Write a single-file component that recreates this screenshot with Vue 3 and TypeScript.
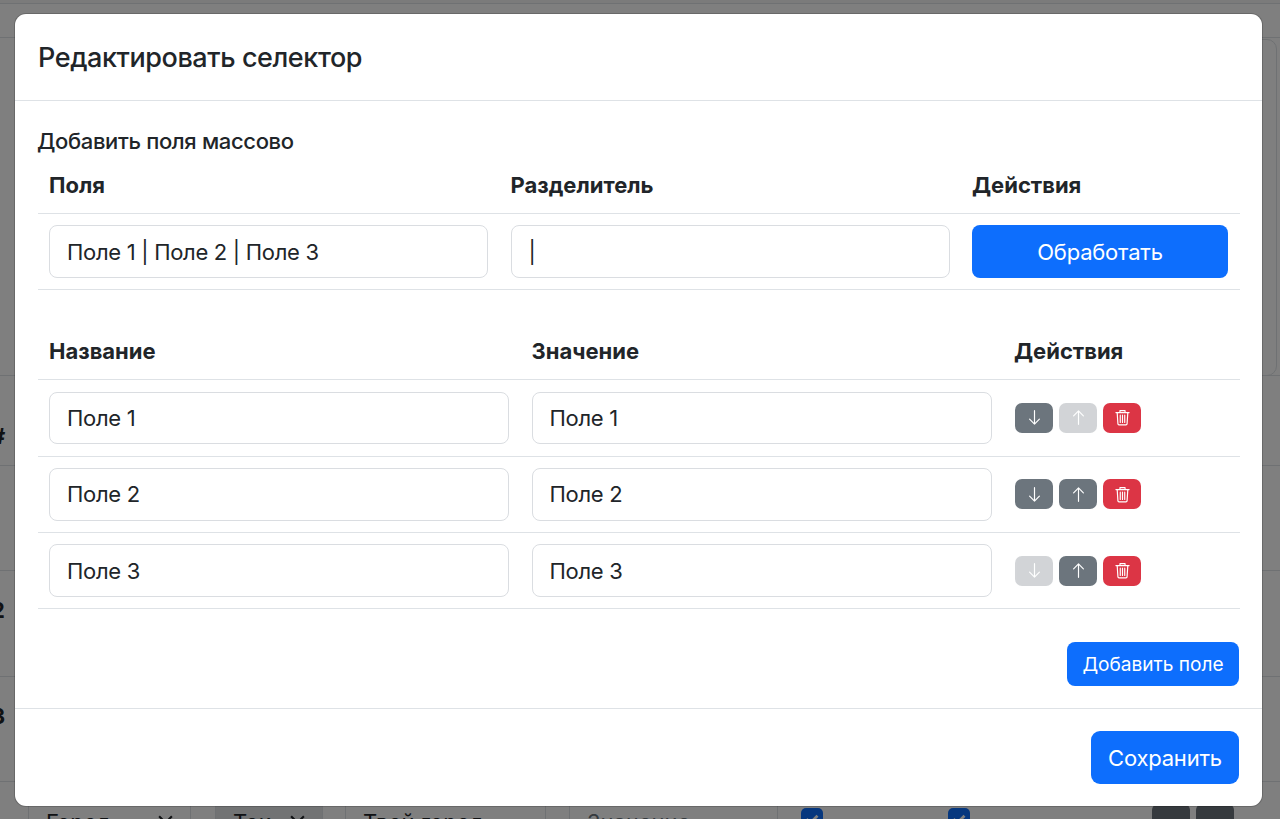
<script setup lang="ts">
interface Row { name: string; canDown: boolean; canUp: boolean }
const rows: Row[] = [
  { name: 'Поле 1', canDown: true, canUp: false },
  { name: 'Поле 2', canDown: true, canUp: true },
  { name: 'Поле 3', canDown: false, canUp: true },
]
</script>

<template>
  <div class="page">
    <div class="bg-strip"></div>
    <div class="bg-top"></div>
    <div class="bg-table">
      <div class="bg-row r1"></div>
      <div class="bg-row r2"><b>#</b></div>
      <div class="bg-row r3"></div>
      <div class="bg-row r4"><b>2</b></div>
      <div class="bg-row r5"><b>3</b></div>
      <div class="bg-row r6">
        <b>1</b>
        <div class="ctl c1">Город<svg class="chev" viewBox="0 0 16 16"><path d="M2 5l6 6 6-6" /></svg></div>
        <div class="ctl c2">Ток<svg class="chev" viewBox="0 0 16 16"><path d="M2 5l6 6 6-6" /></svg></div>
        <div class="ctl c3">Твой город</div>
        <div class="ctl c4">Значение</div>
        <span class="chk c5"><svg viewBox="0 0 20 20"><path d="M5 10l3.5 3.5L15 7" /></svg></span>
        <span class="chk c6"><svg viewBox="0 0 20 20"><path d="M5 10l3.5 3.5L15 7" /></svg></span>
        <span class="darkbtn c7"></span>
        <span class="darkbtn c8"></span>
      </div>
    </div>
    <div class="bg-card"></div>

    <div class="backdrop"></div>

    <div class="modal">
      <header class="modal-header"><h5>Редактировать селектор</h5></header>
      <section class="modal-body">
        <div class="label">Добавить поля массово</div>
        <div class="grid bulk head first">
          <div>Поля</div><div>Разделитель</div><div>Действия</div>
        </div>
        <div class="grid bulk line">
          <input class="field" value="Поле 1 | Поле 2 | Поле 3" />
          <input class="field" value="|" />
          <button class="btn primary process">Обработать</button>
        </div>

        <div class="grid fields head second">
          <div>Название</div><div>Значение</div><div>Действия</div>
        </div>
        <div v-for="r in rows" :key="r.name" class="grid fields line">
          <input class="field" :value="r.name" />
          <input class="field" :value="r.name" />
          <div class="actions">
            <button class="icon grey" :class="{ off: !r.canDown }">
              <svg viewBox="0 0 16 16"><path d="M8 1.6v12.6M3.4 9.6 8 14.2l4.6-4.6" /></svg>
            </button>
            <button class="icon grey" :class="{ off: !r.canUp }">
              <svg viewBox="0 0 16 16"><path d="M8 14.4V1.8M3.4 6.4 8 1.8l4.6 4.6" /></svg>
            </button>
            <button class="icon red">
              <svg viewBox="0 0 16 16"><path d="M1.8 3.4h12.4M5.6 3.2V1.6h4.8v1.6M3 3.4l.7 10.6q.1.9 1 .9h6.6q.9 0 1-.9L13 3.4M5.9 5.8v6.8M8 5.8v6.8M10.1 5.8v6.8" /></svg>
            </button>
          </div>
        </div>
        <div class="add-wrap"><button class="btn primary add">Добавить поле</button></div>
      </section>
      <footer class="modal-footer"><button class="btn primary save">Сохранить</button></footer>
    </div>
  </div>
</template>

<style>
html, body { margin: 0; padding: 0; }
</style>

<style scoped>
.page {
  position: relative;
  width: 1280px;
  height: 819px;
  overflow: hidden;
  background: #fff;
  font-family: "Inter", "Liberation Sans", sans-serif;
  color: #212529;
}
.bg-strip { height: 3px; background: #f6f6f6; border-bottom: 1px solid #dee2e6; }
.bg-top { height: 33px; border-bottom: 1px solid #dee2e6; }
.bg-row { border-bottom: 1px solid #dee2e6; box-sizing: border-box; position: relative; font-size: 22px; }
.bg-row b { position: absolute; left: -9px; }
.r1 { height: 338px; }
.r2 { height: 90px; }
.r2 b { top: 47px; }
.r3 { height: 105px; }
.r4 { height: 106px; }
.r4 b { top: 26px; }
.r5 { height: 105px; }
.r5 b { top: 26px; }
.r6 { height: 60px; border-bottom: 0; }
.r6 b { top: 26px; }
.bg-card {
  position: absolute;
  top: 39px;
  right: 3px;
  width: 60px;
  height: 337px;
  border: 1px solid #dee2e6;
  border-radius: 10px;
  box-sizing: border-box;
}
.ctl {
  position: absolute;
  top: 18px;
  height: 40px;
  box-sizing: border-box;
  border: 1px solid #dee2e6;
  border-radius: 6px;
  padding: 8px 17px;
  line-height: 26px;
}
.c1 { left: 28px; width: 163px; }
.c2 { left: 215px; width: 108px; background: #e4e6e8; }
.c3 { left: 345px; width: 201px; }
.c4 { left: 569px; width: 209px; color: #6c757d; }
.chev { position: absolute; right: 16px; top: 10px; width: 17px; height: 17px; fill: none; stroke: #212529; stroke-width: 2; }
.chk { position: absolute; top: 26px; width: 22px; height: 22px; border-radius: 5px; background: #0d6efd; }
.chk svg { display: block; width: 22px; height: 22px; fill: none; stroke: #fff; stroke-width: 2.5; }
.c5 { left: 801px; }
.c6 { left: 948px; }
.darkbtn { position: absolute; top: 22px; width: 38px; height: 30px; border-radius: 6px; background: #6c757d; }
.c7 { left: 1152px; }
.c8 { left: 1196px; }
.backdrop { position: absolute; inset: 0; background: rgba(0, 0, 0, 0.5); }

.modal {
  position: absolute;
  left: 15px;
  top: 14px;
  width: 1247px;
  height: 792px;
  background: #fff;
  border-radius: 11px;
  display: flex;
  flex-direction: column;
  box-shadow: 0 0 0 1px rgba(0, 0, 0, .18);
}
.modal-header {
  height: 87px;
  box-sizing: border-box;
  border-bottom: 1px solid #dee2e6;
  padding: 2px 23px 0;
  display: flex;
  align-items: center;
}
h5 { margin: 0; font-size: 27px; font-weight: 500; line-height: 1.2; letter-spacing: -.42px; }
.modal-body { flex: 1; padding: 23px 22px 0 23px; display: flex; flex-direction: column; }
.label { font-size: 22px; line-height: 34px; font-weight: 500; height: 34px; letter-spacing: -.35px; margin-left: -1px; }
.grid { display: grid; }
.bulk { grid-template-columns: 461.5px 461.5px 1fr; }
.fields { grid-template-columns: 482.5px 482.5px 1fr; }
.head {
  font-weight: 700;
  font-size: 22px;
  box-sizing: border-box;
  border-bottom: 1px solid #dee2e6;
  line-height: 34px;
}
.head > div { padding: 0 11px; }
.first { height: 56px; padding-top: 10px; }
.second { height: 51px; padding-top: 5px; margin-top: 39px; }
.line { border-bottom: 1px solid #dee2e6; align-items: center; box-sizing: border-box; height: 76.33px; }
.line > * { margin-left: 11px; margin-right: 11px; }
.line > .field:first-child { margin-right: 12px; }
.field {
  height: 52.5px;
  box-sizing: border-box;
  border: 1px solid #dadde1;
  border-radius: 8px;
  padding: 0 17px;
  font: 400 22px/1.5 "Inter", "Liberation Sans", sans-serif;
  letter-spacing: -.3px;
  color: #212529;
  background: #fff;
  width: auto;
  min-width: 0;
  outline: none;
}
.btn { border: 0; border-radius: 8px; color: #fff; font-family: inherit; padding: 0; }
.primary { background: #0d6efd; }
.line > .process { height: 52.5px; font-size: 22px; letter-spacing: -.2px; margin-right: 12px; }
.line > .actions { display: flex; gap: 6px; align-items: center; margin-left: 12px; }
.icon {
  width: 38px;
  height: 30px;
  border: 0;
  border-radius: 7px;
  padding: 0;
  display: flex;
  align-items: center;
  justify-content: center;
}
.icon svg { width: 17px; height: 17px; fill: none; stroke: #fff; stroke-width: 1.1; stroke-linecap: round; stroke-linejoin: round; }
.grey { background: #6c757d; }
.grey.off { opacity: .3; }
.red { background: #dc3545; }
.add-wrap { display: flex; justify-content: flex-end; margin-top: 33px; padding-right: 1px; }
.add { width: 172px; height: 44px; font-size: 19.1px; }
.modal-footer {
  flex: 0 0 98px;
  box-sizing: border-box;
  border-top: 1px solid #dee2e6;
  display: flex;
  justify-content: flex-end;
  align-items: center;
  padding: 0 23px 0 0;
}
.save { width: 148px; height: 53px; font-size: 22px; letter-spacing: -.2px; border-radius: 9px; }
</style>
